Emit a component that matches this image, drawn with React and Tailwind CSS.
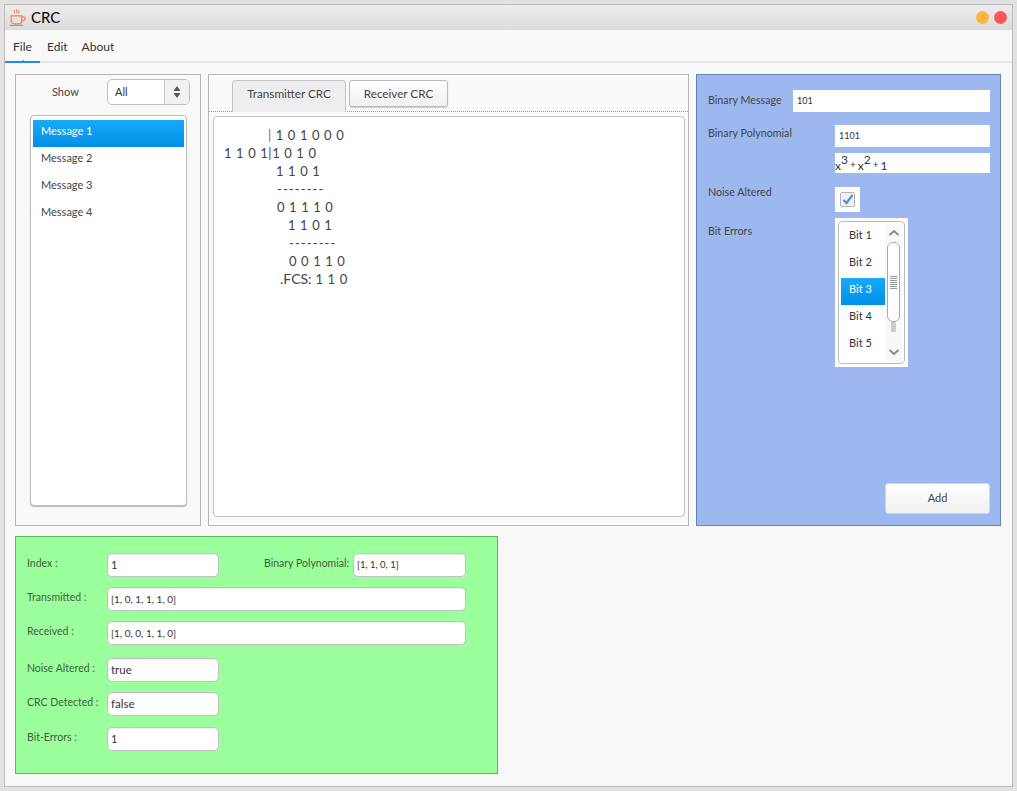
import React from 'react'

const font = "font-['Lato','Liberation_Sans',sans-serif]"

const CoffeeIcon = () => (
  <svg width="19" height="19" viewBox="0 0 18 18" fill="none" stroke="#f47f63" strokeWidth="1.2">
    <path d="M3 7.5h10v4.5a3 3 0 0 1-3 3H6a3 3 0 0 1-3-3z" />
    <path d="M13 8.5h1.5a1.5 1.5 0 0 1 0 3.5H13" />
    <path d="M1.5 16.5h13" />
    <path d="M6 2v3M8 1v4M10 2v3" strokeWidth="0.9" />
  </svg>
)

const Field = ({ value, width, className = 'text-[10px]' }) => (
  <div className={`flex h-[24px] items-center rounded-[5px] border border-[#c4bfc4] bg-white px-[3px] text-[#333] shadow-[inset_0_1px_1px_#eee] ${width} ${className}`}>
    {value}
  </div>
)

const LongDivision = () => {
  const lines = [
    ['ml-[54px]', <><span className="text-[#a0526a]">|</span>{' 1 0 1 0 0 0'}</>],
    ['ml-[10px]', '1 1 0 1|1 0 1 0'],
    ['ml-[62px]', '1 1 0 1'],
    ['ml-[63px] tracking-[1.1px]', '--------'],
    ['ml-[63px]', '0 1 1 1 0'],
    ['ml-[74px]', '1 1 0 1'],
    ['ml-[75px] tracking-[1.1px]', '--------'],
    ['ml-[75px]', '0 0 1 1 0'],
    ['ml-[66px]', <><span className="text-[14px] tracking-normal">.FCS:</span>{' 1 1 0'}</>],
  ]
  return (
    <div className="flex flex-col pt-[9px] text-[13px] leading-[18px] tracking-[0.6px] text-[#444] whitespace-pre">
      {lines.map(([offset, text], i) => (
        <div key={i} className={offset}>{text}</div>
      ))}
    </div>
  )
}

const BitList = () => (
  <div className="h-[149px] w-[73px] bg-white p-[3px]">
    <div className="flex h-[143px] rounded-[4px] border border-[#bdbdbd] p-[2px] text-[11px] text-[#333]">
      <div className="flex w-[44px] flex-col">
        {['Bit 1', 'Bit 2', 'Bit 3', 'Bit 4', 'Bit 5'].map((bit, i) => (
          <div
            key={bit}
            className={`flex h-[27px] items-center pb-[5px] pl-[8px] ${i === 2 ? 'bg-gradient-to-b from-[#17aaf9] to-[#0090e8] pb-[3px] text-white' : ''}`}
          >
            {bit}
          </div>
        ))}
      </div>
      <div className="flex w-[17px] flex-col items-center bg-[#f8f8f8] pt-[2px]">
        <svg width="14" height="14" viewBox="0 0 14 14" fill="none" stroke="#888" strokeWidth="1.8">
          <path d="M2.5 9l4.5-4 4.5 4" />
        </svg>
        <div className="mt-[2px] flex h-[80px] w-[13px] flex-col items-center justify-center gap-[1px] rounded-[6px] border border-[#aaa] bg-white">
          {[0, 1, 2, 3, 4, 5, 6].map(n => (
            <div key={n} className="h-px w-[7px] bg-[#999]" />
          ))}
        </div>
        <div className="h-[10px] w-[5px] bg-[#ccc]" />
        <svg className="mt-[13px]" width="14" height="14" viewBox="0 0 14 14" fill="none" stroke="#888" strokeWidth="1.8">
          <path d="M2.5 5l4.5 4 4.5-4" />
        </svg>
      </div>
    </div>
  </div>
)

const App = () => {
  return (
    <div className={`h-[791px] w-[1017px] overflow-hidden bg-[#e2e2e2] px-[4px] pt-[4px] pb-[4px] ${font}`}>
      <div className="flex h-[783px] flex-col border border-[#bcbcbc] bg-[#f9f9f9]">
        {/* title bar */}
        <div className="flex h-[25px] shrink-0 items-center bg-gradient-to-b from-[#ececec] to-[#dcdcdc] pl-[3px] pr-[5px]">
          <CoffeeIcon />
          <span className="ml-[4px] text-[15px] text-black">CRC</span>
          <div className="ml-auto flex gap-[5px]">
            <div className="h-[13px] w-[13px] rounded-full bg-[#feb63a]" />
            <div className="h-[13px] w-[13px] rounded-full bg-[#fe5555]" />
          </div>
        </div>

        {/* menu */}
        <div className="flex h-[33px] shrink-0 items-end border-b-2 border-[#e2e7ec] text-[12px] text-[#333]">
          <div className="relative -mb-[2px] flex h-[33px] w-[35px] items-center justify-center border-b-2 border-[#1e90d8] pt-[2px]">
            File
            <div className="absolute -bottom-[2px] left-[14px] h-0 w-0 border-x-[4px] border-b-[3px] border-x-transparent border-b-[#1e90d8]" />
          </div>
          <div className="flex h-[31px] items-center pl-[7px] pt-[2px]">Edit</div>
          <div className="flex h-[31px] items-center pl-[14px] pt-[2px]">About</div>
        </div>

        <div className="flex flex-col px-[10px] pt-[11px]">
          <div className="flex h-[452px] gap-[7px]">
            {/* messages */}
            <div className="flex w-[186px] flex-col border border-[#b5b5b5] px-[14px] pt-[4px]">
              <div className="flex h-[26px] items-center">
                <span className="ml-[22px] text-[11px] text-[#444]">Show</span>
                <div className="ml-auto mr-[-4px] flex h-[26px] w-[83px] rounded-[5px] border border-[#c0c0c0] bg-white text-[11px] text-[#333]">
                  <div className="flex flex-1 items-center pl-[7px]">All</div>
                  <div className="flex w-[25px] items-center justify-center rounded-r-[4px] border-l border-[#c8c8c8] bg-[#f2f2f2]">
                    <svg width="8" height="14" viewBox="0 0 8 14" fill="#555">
                      <path d="M4 1l3.5 5h-7zM4 13l3.5-5h-7z" />
                    </svg>
                  </div>
                </div>
              </div>
              <div className="mt-[10px] h-[391px] w-[157px] rounded-[4px] border border-[#bdbdbd] bg-white p-[2px] pt-[4px] text-[11px] text-[#444] shadow-[0_1px_1px_#bbb]">
                {['Message 1', 'Message 2', 'Message 3', 'Message 4'].map((msg, i) => (
                  <div
                    key={msg}
                    className={`flex h-[27px] items-center pb-[5px] pl-[8px] ${i === 0 ? 'bg-gradient-to-b from-[#17aaf9] to-[#0090e8] text-white' : ''}`}
                  >
                    {msg}
                  </div>
                ))}
              </div>
            </div>

            {/* crc tabs */}
            <div className="flex w-[481px] flex-col border border-[#b5b5b5] bg-[#fafafa]">
              <div className="flex h-[37px] shrink-0 gap-[3px] border-b border-dotted border-[#999] pl-[23px] pt-[5px] text-[11.7px] text-[#444]">
                <div className="-mb-[1px] flex w-[114px] items-center justify-center rounded-t-[4px] border border-b-0 border-[#c4c4c4] bg-[#eee] pb-[6px]">
                  Transmitter CRC
                </div>
                <div className="flex h-[27px] w-[99px] items-center justify-center rounded-[3px] border border-[#bbb] bg-gradient-to-b from-white to-[#f0f0f0] shadow-[0_1px_1px_#ccc]">
                  Receiver CRC
                </div>
              </div>
              <div className="ml-[4px] mt-[4px] h-[401px] w-[472px] rounded-[4px] border border-[#c0c0c0] bg-white">
                <LongDivision />
              </div>
            </div>

            {/* message form */}
            <div className="flex w-[305px] flex-col border border-[#5f86b5] bg-[#9db8ee] pl-[11px] pr-[10px] pt-[15px] text-[10.7px] text-[#444]">
              <div className="flex h-[22px] items-center">
                <span className="w-[85px] pb-[2px]">Binary Message</span>
                <div className="flex h-[22px] flex-1 items-center bg-white pl-[4px] text-[9px] text-[#333]">101</div>
              </div>
              <div className="mt-[13px] flex">
                <span className="w-[127px]">Binary Polynomial</span>
                <div className="flex-1">
                  <div className="flex h-[22px] items-center bg-white pl-[4px] text-[9px] text-[#333]">1101</div>
                  <div className="mt-[6px] flex h-[20px] items-end overflow-hidden bg-white text-[12px] leading-[17px] text-[#333]">
                    <span className="-mb-[2px]">x<sup className="text-[12px]">3</sup><span className="relative -top-[2px] mx-[2px] text-[10px]">+</span>x<sup className="text-[12px]">2</sup><span className="relative -top-[2px] mx-[2px] text-[10px]">+</span>1</span>
                  </div>
                </div>
              </div>
              <div className="mt-[14px] flex">
                <span className="-mt-[3px] w-[127px]">Noise Altered</span>
                <div className="flex h-[25px] w-[25px] items-center justify-center bg-white">
                  <div className="flex h-[15px] w-[15px] items-center justify-center rounded-[2px] border border-[#b5b5b5] bg-[#f0f0f0]">
                    <svg width="12" height="11" viewBox="0 0 12 11" fill="none" stroke="#4f94c8" strokeWidth="2.2">
                      <path d="M1.5 6l3 3 6-8" />
                    </svg>
                  </div>
                </div>
              </div>
              <div className="mt-[6px] flex">
                <span className="w-[127px] pt-[5px]">Bit Errors</span>
                <BitList />
              </div>
              <div className="mt-[116px] flex justify-end">
                <div className="flex h-[31px] w-[105px] items-center justify-center rounded-[3px] border border-[#c8d4ec] bg-gradient-to-b from-white to-[#f0f0f0] text-[11px] text-[#444]">
                  Add
                </div>
              </div>
            </div>
          </div>

          {/* summary */}
          <div className="mt-[10px] flex h-[238px] w-[483px] flex-col border border-[#5cb85c] bg-[#9bff9b] pl-[11px] pt-[16px] text-[10.5px] text-[#3f5f3f]">
            <div className="flex items-start">
              <span className="w-[80px] pt-[3px]">Index :</span>
              <Field value="1" width="w-[112px]" className="text-[11px]" />
              <span className="ml-[45px] w-[89px] whitespace-nowrap pt-[3px]">Binary Polynomial:</span>
              <Field value="[1, 1, 0, 1]" width="w-[113px]" className="text-[9.5px]" />
            </div>
            <div className="mt-[10px] flex items-start">
              <span className="w-[80px] pt-[3px]">Transmitted :</span>
              <Field value="[1, 0, 1, 1, 1, 0]" width="w-[359px]" />
            </div>
            <div className="mt-[10px] flex items-start">
              <span className="w-[80px] pt-[3px]">Received :</span>
              <Field value="[1, 0, 0, 1, 1, 0]" width="w-[359px]" />
            </div>
            <div className="mt-[13px] flex items-start">
              <span className="w-[80px] pt-[3px]">Noise Altered :</span>
              <Field value="true" width="w-[112px]" className="text-[11.5px]" />
            </div>
            <div className="mt-[10px] flex items-start">
              <span className="w-[80px] whitespace-nowrap pt-[3px]">CRC Detected :</span>
              <Field value="false" width="w-[112px]" className="text-[11.5px]" />
            </div>
            <div className="mt-[11px] flex items-start">
              <span className="w-[80px] pt-[3px]">Bit-Errors :</span>
              <Field value="1" width="w-[112px]" className="text-[11px]" />
            </div>
          </div>
        </div>
      </div>
    </div>
  )
}

export default App
